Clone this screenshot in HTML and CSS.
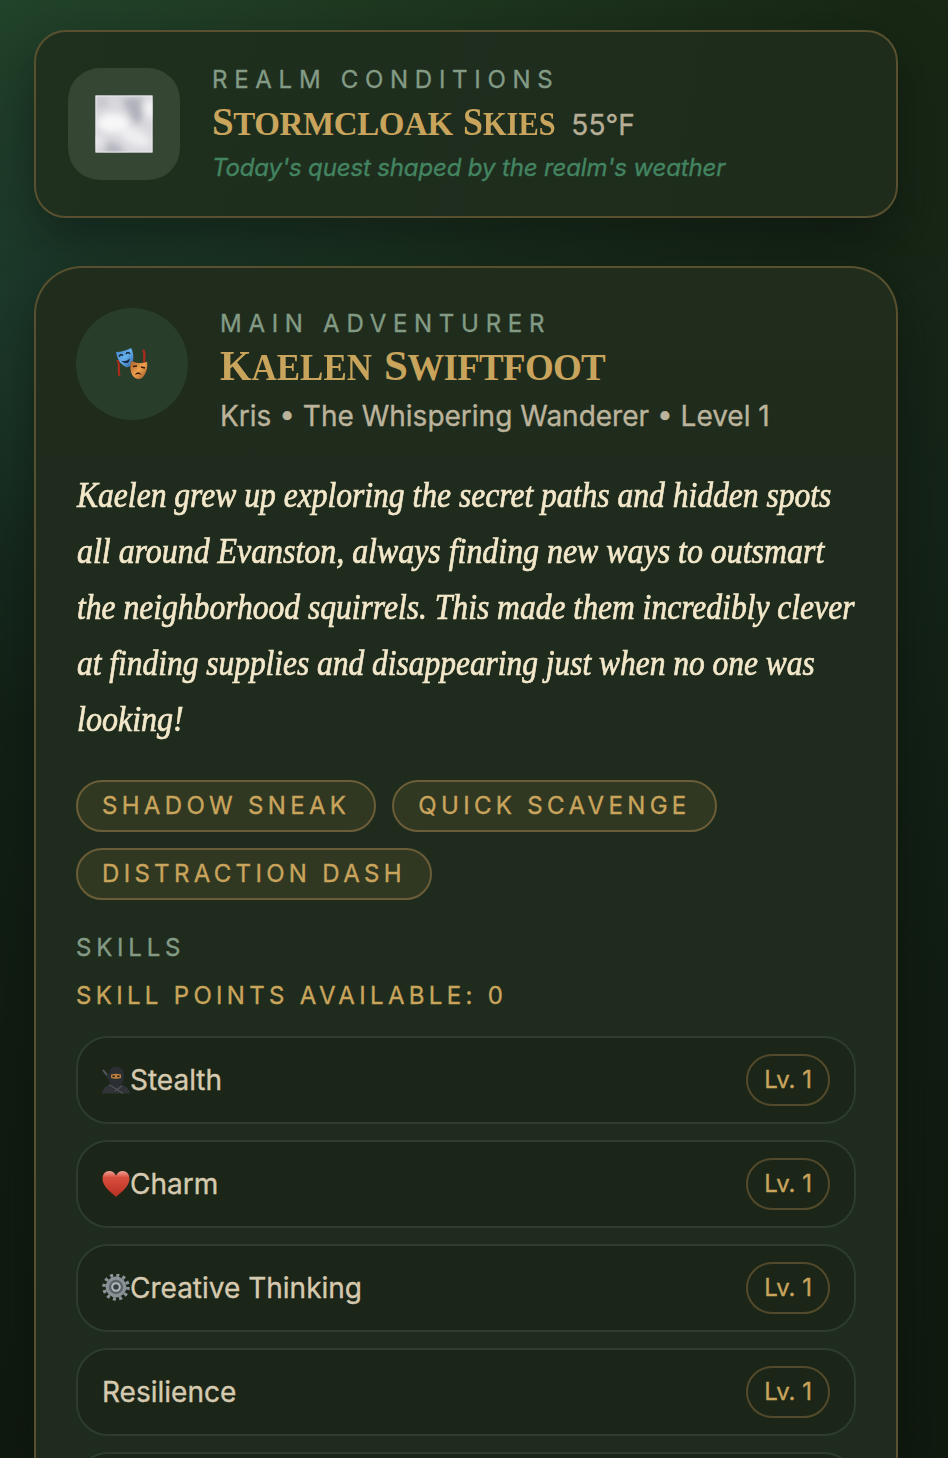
FILE: index.html
```html
<!DOCTYPE html>
<html lang="en">
<head>
<meta charset="utf-8">
<title>Realm Quest</title>
<link rel="stylesheet" href="styles.css">
</head>
<body>
<main class="page">
  <section class="card weather">
    <div class="weather-icon">
      <svg width="58" height="58" viewBox="0 0 58 58">
        <defs>
          <filter id="soft" x="-50%" y="-50%" width="200%" height="200%"><feGaussianBlur stdDeviation="3.500"/></filter>
          <clipPath id="sky"><rect x=".5" y=".5" width="57" height="57"/></clipPath>
        </defs>
        <g clip-path="url(#sky)">
          <rect width="58" height="58" fill="#d8d8dd"/>
          <g filter="url(#soft)">
            <path d="M26 4l22-2-2 10 3 10-9 8-7-14z" fill="#b0b0bb"/>
            <path d="M8 58l6-12 12 6 5 8z" fill="#b2b2bd"/>
            <path d="M0 3l12-1 2 8-12 5z" fill="#c6c6ce"/>
            <ellipse cx="18" cy="28" rx="16" ry="10" fill="#f7f7f8"/>
            <ellipse cx="40" cy="42" rx="17" ry="8" fill="#eeeef1" transform="rotate(25 40 42)"/>
            <ellipse cx="55" cy="14" rx="6" ry="10" fill="#f3f3f5"/>
            <ellipse cx="3" cy="46" rx="5" ry="6" fill="#e8e8ec"/>
          </g>
        </g>
        <rect x="1" y="1" width="56" height="56" fill="none" stroke="#eeeef1" stroke-opacity=".75"/>
      </svg>
    </div>
    <div class="heading">
      <p class="eyebrow">Realm Conditions</p>
      <div class="title-row">
        <h1 class="title title-weather"><span class="word w-storm">Stormcloak</span><span class="word w-skies">Skies</span></h1>
        <span class="temp">55°F</span>
      </div>
      <p class="note">Today's quest shaped by the realm's weather</p>
    </div>
  </section>

  <section class="card hero">
    <header class="hero-head">
      <div class="avatar">
        <svg width="34" height="34" viewBox="0 0 34 34">
          <defs>
            <linearGradient id="blue" x1="0" y1="0" x2="1" y2="1"><stop offset="0" stop-color="#3d7cc4"/><stop offset=".5" stop-color="#66b1ee"/><stop offset="1" stop-color="#2c609f"/></linearGradient>
            <linearGradient id="amber" x1="0" y1="0" x2="1" y2="1"><stop offset="0" stop-color="#a85f28"/><stop offset=".5" stop-color="#eda04e"/><stop offset="1" stop-color="#9a5524"/></linearGradient>
          </defs>
          <path d="M2.500 13c3 5 0 9 2 16M28 3c4 5-1 8 2 14" fill="none" stroke="#ad2b1c" stroke-width="2.200"/>
          <path d="M1 5C7 5 12 3 16 1c2 3 3 9 2 13-1 4-4 7-7 6C6 18 2 12 1 5z" fill="url(#blue)"/>
          <path d="M4 9.500q2-3 4-1M11 7q2-3 4 0" fill="none" stroke="#17252f" stroke-width="1.500"/>
          <path d="M6 13.500q5 2 9-2-1 5-4.500 4.500-3-.5-4.500-2.500z" fill="#13233a"/>
          <path d="M16 14c5 2 10 3 16 1 1 6-1 12-5 16-3 2-7 1-9-2-3-4-3-10-2-15z" fill="url(#amber)"/>
          <path d="M18 19.500l4-.5M26 20l4 1" fill="none" stroke="#3c1b0b" stroke-width="1.600"/>
          <path d="M19.500 28q3.500-5.500 7.500 0-3.500-2-7.500 0z" fill="#3c1b0b"/>
        </svg>
      </div>
      <div class="heading">
        <p class="eyebrow">Main Adventurer</p>
        <h2 class="title title-hero"><span class="word w-kaelen">Kaelen</span><span class="word w-swift">Swiftfoot</span></h2>
        <p class="meta">Kris • The Whispering Wanderer • Level 1</p>
      </div>
    </header>

    <p class="story">
      <span class="line l1">Kaelen grew up exploring the secret paths and hidden spots</span>
      <span class="line l2">all around Evanston, always finding new ways to outsmart</span>
      <span class="line l3">the neighborhood squirrels. This made them incredibly clever</span>
      <span class="line l4">at finding supplies and disappearing just when no one was</span>
      <span class="line l5">looking!</span>
    </p>

    <ul class="tags">
      <li class="tag">Shadow Sneak</li>
      <li class="tag">Quick Scavenge</li>
      <li class="tag">Distraction Dash</li>
    </ul>

    <h3 class="skills-title">Skills</h3>
    <p class="points">Skill Points Available: 0</p>

    <ul class="skills">
      <li class="skill">
        <span class="skill-name"><svg class="emoji" viewBox="0 0 28 28">
          <path d="M1 4l12 16" stroke="#2f3236" stroke-width="2.200"/><path d="M1 4l4 5" stroke="#55585b" stroke-width="2"/>
          <path d="M0 27.500c1-5 4-8 8-9h11c5 1 8 4 9 9z" fill="#303338"/>
          <path d="M14 .5c5.500 0 8 4 8 9.500 0 6-3 10.500-8 10.500S6.500 16 6.500 10C6.500 4.500 9 .5 14 .5z" fill="#2b2e33"/>
          <path d="M9 8.500q5-1.500 10 0v3.500q-5 1.500-10 0z" fill="#b8803f"/><path d="M10.500 10.300h2.200M15.300 10.300h2.200" stroke="#25150c" stroke-width="1.600"/>
          <path d="M7 18.500l14 9M20 20l-7 5" stroke="#595c61" stroke-width="1"/>
        </svg>Stealth</span><span class="level">Lv. 1</span>
      </li>
      <li class="skill">
        <span class="skill-name"><svg class="emoji" viewBox="0 0 28 28">
          <defs><linearGradient id="heart" x1="0" y1="0" x2="0" y2="1"><stop offset="0" stop-color="#efa294"/><stop offset=".25" stop-color="#d94f3d"/><stop offset="1" stop-color="#b62f22"/></linearGradient></defs>
          <path d="M14 27C9 22 .5 17 .5 8.500.5 4 3.500 1 7.300 1c3.200 0 5.500 1.900 6.700 4.800C15.200 2.900 17.500 1 20.700 1c3.800 0 6.800 3 6.800 7.500C27.500 17 19 22 14 27z" fill="url(#heart)"/>
        </svg>Charm</span><span class="level">Lv. 1</span>
      </li>
      <li class="skill">
        <span class="skill-name"><svg class="emoji" viewBox="0 0 28 28">
          <circle cx="14" cy="13" r="12" fill="none" stroke="#8b9398" stroke-width="3.500" stroke-dasharray="3 3.280"/>
          <circle cx="14" cy="13" r="8.800" fill="#5b6368" stroke="#8a9297" stroke-width="3.200"/>
          <circle cx="14" cy="13" r="3.800" fill="#3a4144" stroke="#b1b8bc" stroke-width="2"/>
        </svg>Creative Thinking</span><span class="level">Lv. 1</span>
      </li>
      <li class="skill"><span class="skill-name">Resilience</span><span class="level">Lv. 1</span></li>
      <li class="skill"></li>
    </ul>
  </section>
</main>
</body>
</html>
```
FILE: styles.css
```css
* { box-sizing: border-box; margin: 0; padding: 0; }
html, body { height: 1458px; overflow: hidden; }
body {
  font-family: Inter, "Liberation Sans", sans-serif;
  color: #d6cbb2;
  -webkit-text-stroke: .35px currentColor;
  background:
    radial-gradient(ellipse 500px 420px at 0 300px, rgba(28, 62, 52, .55), rgba(28, 62, 52, 0)),
    radial-gradient(ellipse 900px 560px at 0 0, rgba(46, 96, 62, .5), rgba(46, 96, 62, 0)),
    linear-gradient(180deg, #182714 0, #172616 260px, #152418 500px, #111d12 1000px, #101a0f 1458px);
}
.page { display: flex; flex-direction: column; gap: 48px; height: 1458px; padding: 30px 50px 0 34px; overflow: hidden; }
.card { border: 2px solid #58502f; box-shadow: 0 20px 50px rgba(8, 14, 12, .5); }
.weather {
  display: flex; flex: none; align-items: center; gap: 32px; height: 188px; padding: 32px; border-radius: 32px;
  background: linear-gradient(100deg, #1f301e, #1e2d1d 50%, #1f2c1c);
}
.weather-icon {
  display: flex; align-items: center; justify-content: center;
  width: 112px; height: 112px; border-radius: 32px; background: #354633;
}
.heading { display: flex; flex-direction: column; }
.eyebrow { font-size: 24px; line-height: 32px; letter-spacing: 6.72px; text-transform: uppercase; color: #839b85; }
.title-row { display: flex; align-items: baseline; gap: 16px; height: 56px; }
.title {
  display: flex; align-items: baseline;
  font-family: "Liberation Serif", serif; font-weight: 700; line-height: 52px;
  text-transform: uppercase; color: #c9a45c; white-space: nowrap;
  -webkit-text-stroke: 0;
}
.word { display: block; transform-origin: 0 50%; }
.title-weather { gap: 10px; font-size: 33px; }
.title-weather .word::first-letter { font-size: 39px; }
.title-hero { gap: 12px; height: 56px; font-size: 37px; }
.title-hero .word::first-letter { font-size: 43px; }
.w-storm { letter-spacing: -.4px; }
.w-skies { margin-right: -8px; transform: scaleX(.92); }
.w-kaelen { margin-right: -9px; transform: scaleX(.944); }
.w-swift { letter-spacing: -.7px; }
.temp { font-size: 28px; line-height: 52px; color: #b6ae97; }
.note { font-size: 24px; line-height: 32px; letter-spacing: -.14px; font-style: italic; color: #438461; }
.hero {
  flex: 1; min-height: 0; padding: 40px 40px 0; border-bottom: 0; border-radius: 48px 48px 0 0; overflow: hidden;
  background: linear-gradient(180deg, #202d1d, #1f2c1d 200px, #1f2c1d);
}
.hero-head { display: flex; gap: 32px; }
.avatar {
  display: flex; align-items: center; justify-content: center;
  width: 112px; height: 112px; border-radius: 50%; background: #283e2b;
}
.meta { font-size: 28px; line-height: 40px; color: #bbb39b; }
.story {
  margin-top: 32px; padding-left: 1px; font-family: "Liberation Serif", serif; font-style: italic;
  font-size: 35px; line-height: 56px; color: #f4e8cb; -webkit-text-stroke: .7px #f4e8cb;
}
/* Condensed italic: each line is narrowed from its left edge. */
.line { display: block; width: max-content; white-space: nowrap; transform: scaleX(.902); transform-origin: 0 50%; }
.l2 { transform: scaleX(.911); }
.l4 { transform: scaleX(.898); }
.l5 { transform: scaleX(.915); }
.tags { display: flex; flex-wrap: wrap; gap: 16px; margin-top: 32px; list-style: none; }
.tag {
  padding: 8px 24px; border: 2px solid #6a5d37; border-radius: 26px; background: #303822;
  font-size: 24px; line-height: 32px; letter-spacing: 4.32px; text-transform: uppercase; color: #c9a45c;
}
.skills-title { margin-top: 32px; font-size: 24px; font-weight: 400; line-height: 32px; letter-spacing: 4.8px; text-transform: uppercase; color: #839b85; }
.points { margin-top: 16px; font-size: 24px; line-height: 32px; letter-spacing: 4.32px; text-transform: uppercase; color: #c9a45c; }
.skills { display: flex; flex-direction: column; gap: 16px; margin-top: 24px; list-style: none; }
.skill {
  display: flex; flex: none; align-items: center; justify-content: space-between; height: 88px; padding: 0 24px;
  border: 2px solid #2d3c2d; border-radius: 32px; background: #1c2618;
}
.skill-name { display: flex; align-items: center; font-size: 28px; line-height: 40px; color: #d5cab0; }
.emoji { width: 28px; height: 28px; fill: none; }
.level {
  padding: 8px 16px; border: 2px solid #534a2b; border-radius: 26px;
  font-size: 24px; line-height: 32px; color: #c9a45c;
}
```
